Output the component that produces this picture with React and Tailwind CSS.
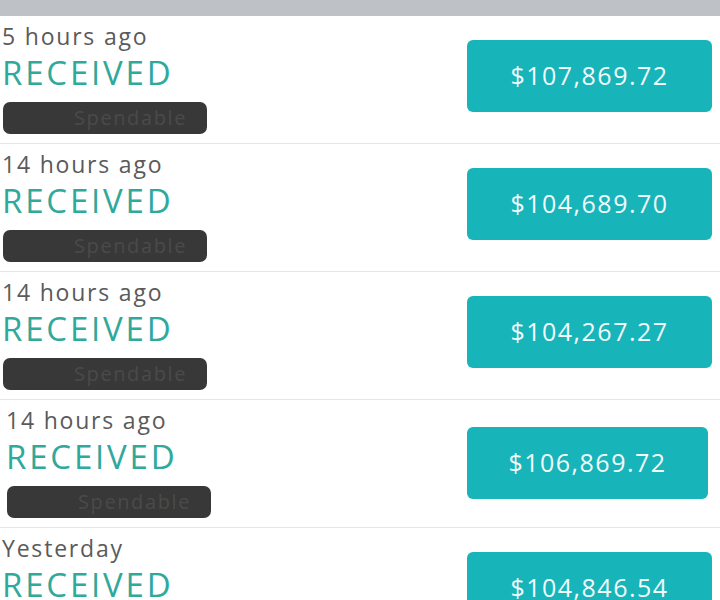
const rows = [
  { time: "5 hours ago", amount: "$107,869.72", shifted: false },
  { time: "14 hours ago", amount: "$104,689.70", shifted: false },
  { time: "14 hours ago", amount: "$104,267.27", shifted: false },
  { time: "14 hours ago", amount: "$106,869.72", shifted: true },
  { time: "Yesterday", amount: "$104,846.54", shifted: false },
];

const TxRow = ({ tx }) => (
  <div className="h-[128px] border-b border-[#e6e6e6] flex justify-between items-start">
    <div className={`flex flex-col pt-[6px] ${tx.shifted ? "pl-[6px]" : "pl-[2px]"}`}>
      <span className="text-[23px] leading-[28px] text-[#5a5a5a] tracking-[1.8px]">{tx.time}</span>
      <span className="text-[33px] leading-[36px] mt-[5px] text-[#2fa99c] tracking-[2.8px]">
        RECEIVED
      </span>
      <div className="mt-[11px] ml-[1px] w-[204px] h-[32px] rounded-[7px] bg-[#383838] flex items-center pl-[71px]">
        <span className="text-[20px] text-[#4a4a4a] tracking-[1.6px]">Spendable</span>
      </div>
    </div>
    <div
      className={`${
        tx.shifted ? "w-[241px] mr-[12px] mt-[27px]" : "w-[245px] mr-[8px] mt-[24px]"
      } h-[72px] rounded-[6px] bg-[#17b4b9] flex items-center justify-center`}
    >
      <span className="text-[25px] text-[#f2fbfb] tracking-[1.5px]">{tx.amount}</span>
    </div>
  </div>
);

export default function App() {
  return (
    <div className="w-[720px] h-[600px] overflow-hidden bg-white font-['Open_Sans',sans-serif]">
      <div className="h-[16px] bg-[#bec1c6]" />
      {rows.map((tx, i) => (
        <TxRow key={i} tx={tx} />
      ))}
    </div>
  );
}
